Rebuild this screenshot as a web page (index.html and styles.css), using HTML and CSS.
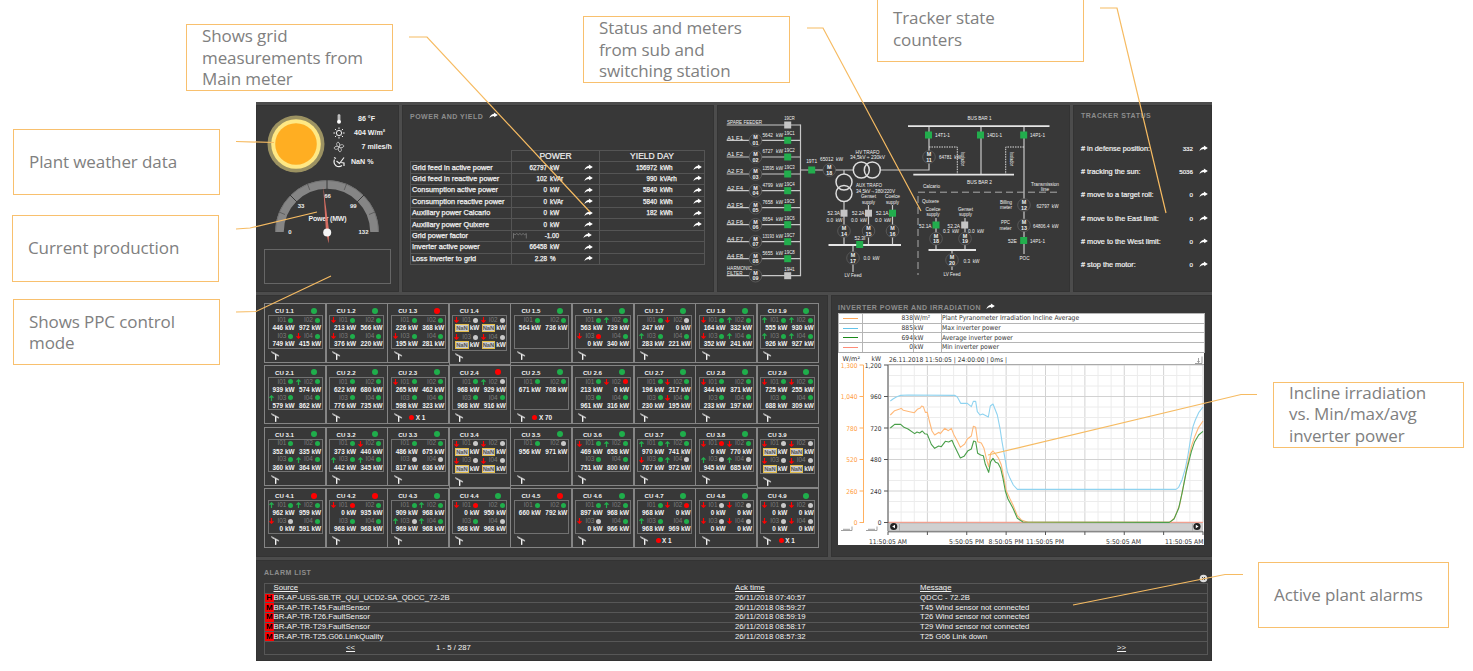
FILE: index.html
```html
<!DOCTYPE html>
<html lang="en">
<head>
<meta charset="utf-8">
<title>Solar plant overview</title>
<link rel="stylesheet" href="styles.css">
</head>
<body>
<svg class="defs" width="0" height="0">
  <symbol id="share" viewBox="0 0 10 7"><path fill="#fff" d="M.4 6.6C1 3.7 3 2.1 5.4 1.9V.2L9.8 2.9 5.9 5.5 5.7 4C3.5 4 1.8 4.8.4 6.6Z"/></symbol>
  <symbol id="panel" viewBox="0 0 10 10"><path fill="none" stroke="#ddd" stroke-width=".9" d="M.3.6 9 5.2M.6 1.6 8.6 5.8M5 3.6V9.8"/><path fill="none" stroke="#fff" stroke-width="1.3" d="M5.3 3.8V9.8"/></symbol>
</svg>
<main class="stage">
  <div class="dashboard">
    <div class="row row-top">
      <section class="panel weather">
        <div class="weather-head">
          <svg class="sun" width="58" height="58" viewBox="0 0 58 58"><circle cx="29" cy="29" r="28.5" fill="#9c9262"/><circle cx="29" cy="29" r="24.8" fill="#ffe884"/><circle cx="29" cy="29" r="20.8" fill="#ffae22"/></svg>
          <ul class="readings">
            <li><svg width="12" height="12" viewBox="0 0 12 12"><path d="M5 1.8h2v5.4h-2z" fill="#aaa" stroke="#ddd" stroke-width=".7"/><circle cx="6" cy="8.8" r="2" fill="#fff"/></svg><span class="v1">86 °F</span></li>
            <li><svg width="12" height="12" viewBox="0 0 12 12" fill="none" stroke="#eee"><circle cx="6" cy="6" r="2.6"/><path d="M6 .4v1.8M6 9.8v1.8M.4 6h1.8M9.8 6h1.8M2 2l1.3 1.3M8.7 8.7 10 10M10 2 8.7 3.3M3.3 8.7 2 10"/></svg><span class="v2">404 W/m²</span></li>
            <li><svg width="12" height="12" viewBox="0 0 12 12" fill="none" stroke="#bbb"><path d="M6 6C3 5 3 2 5 1c2 1 2 3 1 5ZM6 6c1-3 4-3 5-1-1 2-3 2-5 1ZM6 6c3 1 3 4 1 5-2-1-2-3-1-5ZM6 6C5 9 2 9 1 7c1-2 3-2 5-1Z"/></svg><span class="v3">7 miles/h</span></li>
            <li><svg width="12" height="12" viewBox="0 0 12 12" fill="none" stroke="#eee" stroke-width="1.2"><path d="M1.5 3.5C-.5 9 5 12.5 9 9.500M3.500 5l3 2.500 4.500-6M8 6.500l3 .5V10M1 1.500l2 1M5 10.500h3"/></svg><span class="v4">NaN %</span></li>
          </ul>
        </div>
        <svg class="gauge" width="140" height="72" viewBox="257 176 140 72">
          <path d="M279.500 232a47.500 47.500 0 0 1 95 0" fill="none" stroke="#858585" stroke-width="8.500"/>
          <path d="M275.500 232a51.500 51.500 0 0 1 103 0" fill="none" stroke="#6f6f6f" stroke-width=".8"/>
          <g stroke="#383838"><path d="M327 179v11M289.500 194.500l7.500 7.500M364.500 194.500l-7.500 7.500"/><path stroke-width=".5" d="M279 212l6 2.500M375 212l-6 2.500M307.500 184l2.300 6M346.500 184l-2.300 6"/></g>
          <g class="dial"><text x="290" y="234.200">0</text><text x="301" y="208.200">33</text><text x="327.500" y="198">66</text><text x="353.300" y="208.200">99</text><text x="363.500" y="234.200">132</text></g>
          <text class="dial-title" x="327.500" y="221" textLength="38">Power (MW)</text>
          <path d="M323.200 185.500 326 232 328.600 243.500 329.200 232Z" fill="#e87468" opacity=".9"/>
          <circle cx="327.200" cy="232.500" r="4" fill="#f5f5f5"/>
        </svg>
        <div class="ppc-box"></div>
      </section>
      <section class="panel power">
        <h2>POWER AND YIELD <svg width="9" height="7"><use href="#share"/></svg></h2>
        <table class="yield"><thead><tr><th class="blank"></th><th>POWER</th><th>YIELD DAY</th></tr></thead><tbody id="yield"></tbody></table>
      </section>
      <section class="panel"><svg id="diagram" class="diagram" width="353" height="187" viewBox="717 105 353 187"></svg></section>
      <section class="panel tracker">
        <h2>TRACKER STATUS</h2>
        <ul id="tracker"></ul>
      </section>
    </div>
    <div class="row row-mid">
      <section class="panel units"><div id="units" class="unit-grid"></div></section>
      <section class="panel trend">
        <h2>INVERTER POWER AND IRRADIATION <svg width="9" height="7"><use href="#share"/></svg></h2>
        <table class="legend"><tbody>
          <tr><td><i class="key orange"></i></td><td class="num">838</td><td>W/m²</td><td>Plant Pyranometer Irradiation Incline Average</td></tr>
          <tr><td><i class="key blue"></i></td><td class="num">885</td><td>kW</td><td>Max inverter power</td></tr>
          <tr><td><i class="key green"></i></td><td class="num">694</td><td>kW</td><td>Average inverter power</td></tr>
          <tr><td><i class="key red"></i></td><td class="num">0</td><td>kW</td><td>Min inverter power</td></tr>
        </tbody></table>
        <svg id="chart" class="chart" width="366" height="193" viewBox="838 352 366 193"></svg>
      </section>
    </div>
    <section class="panel alarms">
      <div class="alarm-head"><h2>ALARM LIST</h2><svg width="9" height="9" viewBox="0 0 9 9"><circle cx="4.500" cy="4.500" r="3.800" fill="#ddd"/><path d="M3 3l3 3M6 3 3 6" stroke="#444"/></svg></div>
      <table class="alarm-table"><tbody>
        <tr class="heads"><td></td><td>Source</td><td>Ack time</td><td>Message</td></tr>
        <tr><td class="sev">H</td><td>BR-AP-USS-SB.TR_QUI_UCD2-SA_QDCC_72-2B</td><td>26/11/2018 07:40:57</td><td>QDCC - 72.2B</td></tr>
        <tr><td class="sev">M</td><td>BR-AP-TR-T45.FaultSensor</td><td>26/11/2018 08:59:27</td><td>T45 Wind sensor not connected</td></tr>
        <tr><td class="sev">M</td><td>BR-AP-TR-T26.FaultSensor</td><td>26/11/2018 08:59:19</td><td>T26 Wind sensor not connected</td></tr>
        <tr><td class="sev">M</td><td>BR-AP-TR-T29.FaultSensor</td><td>26/11/2018 08:58:17</td><td>T29 Wind sensor not connected</td></tr>
        <tr><td class="sev">M</td><td>BR-AP-TR-T25.G06.LinkQuality</td><td>26/11/2018 08:57:32</td><td>T25 G06 Link down</td></tr>
      </tbody></table>
      <div class="pager"><u>&lt;&lt;</u><span>1 - 5 / 287</span><u>&gt;&gt;</u></div>
    </section>
  </div>

  <svg class="leaders" width="1473" height="671">
    <path d="M409 37h18L590 212M807 28h16L921 211M1100 8h17L1166 213M236 141.500 274 142.500M236 229 250 228 317 212M236 312 256 311.500 331 276M1257 394.500h-16L988 455M1243 574.500h-18L1073 605"/>
  </svg>
  <div class="note n-grid">Shows grid<br>measurements from<br>Main meter</div>
  <div class="note n-status">Status and meters<br>from sub and<br>switching station</div>
  <div class="note n-tracker">Tracker state<br>counters</div>
  <div class="note n-weather">Plant weather data</div>
  <div class="note n-current">Current production</div>
  <div class="note n-ppc">Shows PPC control<br>mode</div>
  <div class="note n-incline">Incline irradiation<br>vs. Min/max/avg<br>inverter power</div>
  <div class="note n-alarms">Active plant alarms</div>
</main>
<script src="app.js"></script>
</body>
</html>
```

FILE: styles.css
```css
* { box-sizing: border-box; }
body { margin: 0; background: #fff; font-family: "Liberation Sans", Arial, sans-serif; }
.defs { position: absolute; }
.stage { position: relative; width: 1473px; height: 671px; overflow: hidden; padding: 102px 0 0 256px; }
.dashboard { width: 956px; height: 559px; display: grid; grid-template-rows: 187px 262px 101px; gap: 3px; padding-top: 3px; background: #4c4c4c; color: #f2f2f2; }
.row { display: grid; gap: 3px; }
.row-top { grid-template-columns: 143px 312px 353px 139px; }
.row-mid { grid-template-columns: 572px 381px; }
.panel { background: #383838; overflow: hidden; min-width: 0; box-shadow: inset 0 0 0 1px #333; }
h2 { margin: 0; font-size: 7px; line-height: 8px; font-weight: bold; letter-spacing: .5px; color: #8d8d8d; white-space: nowrap; }
h2 svg { margin-left: 3px; }
ul { list-style: none; margin: 0; padding: 0; }

.weather { padding: 7px 0 0 8px; }
.weather-head { display: flex; padding-left: 3px; height: 64px; }
.sun { margin-top: 2.500px; flex: none; }
.readings { padding-left: 8px; }
.readings li { display: flex; align-items: center; height: 14.2px; font-size: 7.1px; font-weight: bold; white-space: nowrap; }
.readings svg { margin-right: 6px; }
.v1 { padding-left: 7px; }
.v2 { padding-left: 3px; }
.v3 { padding-left: 10.5px; }
.v4 { padding-left: 0; }
.gauge { display: block; margin-left: -7px; }
.dial { font-size: 6px; font-weight: bold; fill: #eee; text-anchor: middle; }
.dial-title { font-size: 7px; font-weight: bold; fill: #eee; text-anchor: middle; }
.ppc-box { width: 127px; height: 35px; border: 1px solid #666; margin-top: 1px; }

.power { padding: 7px 0 0 8px; }
.yield { border-collapse: collapse; table-layout: fixed; width: 295px; margin-top: 29px; font-size: 7.3px; }
.yield th { font-size: 8.5px; font-weight: normal; height: 11.4px; padding: 0; line-height: 10px; border: 1px solid #555; -webkit-text-stroke: .2px; }
.yield th:nth-child(1) { width: 101px; }
.yield th:nth-child(2) { width: 88px; }
.yield th.blank { border-left: none; border-top: none; }
.yield td { height: 11.4px; padding: 0 0 0 1px; line-height: 10px; border: 1px solid #555; white-space: nowrap; -webkit-text-stroke: .25px; }
.reading { display: grid; grid-template-columns: 34px 31px 10px; column-gap: 3px; align-items: center; font-size: 6.3px; }
.reading b { font-weight: normal; text-align: right; }
.reading.day { grid-template-columns: 56px 30px 10px; }
.reading.pf { grid-template-columns: 13px 32px 19px 10px; column-gap: 1px; }
.reading.pf > svg:last-child { margin-left: 3px; }

.diagram { display: block; font-size: 6px; fill: #f0f0f0; }
.wire { stroke: #c8c8c8; stroke-width: 1.2; fill: none; }
.bus { stroke: #e6e6e6; stroke-width: 1.8; }
.dots { stroke: #ddd; stroke-width: 1; stroke-dasharray: 1.500 1; fill: none; }
.dash { stroke: #aaa; stroke-width: 1; stroke-dasharray: 7 4; fill: none; }
.coil { stroke: #ddd; stroke-width: 1.500; fill: none; }
.meter { fill: #383838; stroke: #606060; stroke-width: .8; }
.tiny { font-size: 5.4px; font-weight: bold; text-anchor: middle; }
.small { font-size: 4.800px; }
.mid { text-anchor: middle; }
.end { text-anchor: end; }

.tracker { padding: 7px 4px 0 8px; }
.tracker ul { padding-top: 17px; }
.tracker li { display: grid; grid-template-columns: 1fr auto 9px; column-gap: 6px; align-items: center; height: 23.2px; font-size: 7.3px; white-space: nowrap; -webkit-text-stroke: .2px; }
.tracker b { font-weight: normal; font-size: 6.2px; }

.units { padding: 8px 0 0 8px; }
.unit-grid { display: grid; grid-template-columns: repeat(9, 61.600px); grid-template-rows: repeat(4, 59.700px); row-gap: 2.100px; }
.unit { border: 1px solid #858585; padding: 2px 2.500px 0; margin-right: -.5px; font-size: 6.4px; font-weight: bold; }
.unit.fault { height: 61.700px; }
.unit-title { display: flex; justify-content: space-between; align-items: center; height: 9px; padding: 0 6px 0 7.500px; font-size: 6.1px; }
.lamp { width: 5px; height: 5px; border-radius: 50%; background: #1fae4b; flex: none; }
.lamp.big { width: 6px; height: 6px; }
.lamp.r { background: #f00; }
.lamp.w { background: #c9c9c9; }
.inverters { height: 33.500px; border: 1px solid #727272; display: grid; grid-template-columns: 26px 26.500px; grid-auto-rows: 16px; }
.fault .inverters { height: 35.500px; grid-auto-rows: 17px; }
.inv { line-height: 8.300px; text-align: right; white-space: nowrap; }
.inv-name { display: flex; align-items: center; justify-content: flex-end; gap: 2px; height: 8px; padding-right: 1.200px; font-weight: normal; color: #7c7c7c; }
.inv-name svg { margin-right: 1px; }
.nan { display: inline-block; background: #ccc; color: #555; border: 1px solid #e3bd4b; line-height: 6px; height: 8px; margin-right: 1px; width: 13.500px; text-align: center; font-size: 5.8px; }
.unit-foot { display: flex; align-items: center; gap: 1.500px; padding: 2px 0 0 3px; height: 12px; }
.unit-foot .lamp { margin-left: 5px; }

.trend { padding: 8px 0 0 7px; }
.legend { border-collapse: collapse; table-layout: fixed; width: 367px; margin-top: 1px; background: #fff; color: #333; font: 6.7px "DejaVu Sans Condensed", "DejaVu Sans", sans-serif; font-stretch: condensed; }
.legend td { border: 1px solid #b5b5b5; height: 9.700px; line-height: 8px; padding: 0; white-space: nowrap; }
.legend td:nth-child(1) { width: 24px; }
.legend td:nth-child(2) { width: 51px; text-align: right; }
.legend td:nth-child(3) { width: 28px; }
.key { display: block; width: 15px; height: 1px; margin: 0 auto; }
.orange { background: #ffa95c; }
.blue { background: #62c3ea; }
.green { background: #1a8a1a; }
.red { background: #ff8c78; }
.chart { display: block; background: #fff; margin-top: -1px; font: 6.5px "DejaVu Sans Condensed", "DejaVu Sans", sans-serif; font-stretch: condensed; fill: #333; }
.chart .irr { fill: #ff9c40; }

.alarms { padding: 9px 4px 0 8px; }
.alarm-head { display: flex; justify-content: space-between; height: 14px; }
.alarm-head svg { margin-top: 5px; }
.alarm-table { border-collapse: collapse; table-layout: fixed; width: 944px; font-size: 7.750px; }
.alarm-table tr { border: 1px solid #575757; }
.alarm-table td { height: 9.700px; padding: 0; line-height: 8px; white-space: nowrap; }
.alarm-table td:nth-child(1) { width: 9px; }
.alarm-table td:nth-child(2) { width: 461.500px; }
.alarm-table td:nth-child(3) { width: 185px; }
.heads { text-decoration: underline; }
.alarm-table .sev { background: #f00; color: #000; font-weight: bold; text-align: center; font-size: 8px; }
.pager { width: 944px; height: 13px; border: 1px solid #575757; border-top: none; display: grid; grid-template-columns: 90px 681px auto; padding-left: 81px; font-size: 7.750px; line-height: 12px; }

.leaders { position: absolute; left: 0; top: 0; }
.leaders path { fill: none; stroke: #f6bb62; stroke-width: 1.200; }
.note { position: absolute; display: flex; align-items: center; border: 1px solid #f8c06e; background: #fff; color: #808080; font: 17px/21.500px "Open Sans", "Noto Sans", sans-serif; letter-spacing: -.1px; padding-left: 15px; white-space: nowrap; width: 207px; height: 67px; }
.n-grid { left: 186px; top: 24px; }
.n-status { left: 583px; top: 16px; }
.n-tracker { left: 877px; top: -5px; }
.n-weather { left: 13px; top: 129px; height: 66px; }
.n-current { left: 12px; top: 215px; padding-bottom: 2px; }
.n-ppc { left: 13px; top: 299px; height: 66px; }
.n-incline { left: 1273px; top: 382px; width: 191px; height: 66px; padding-bottom: 2px; }
.n-alarms { left: 1258px; top: 562px; width: 191px; height: 66px; padding-bottom: 1px; }
```

FILE: app.js
```js
const el = id => document.getElementById(id);
const share = '<svg width="9" height="7"><use href="#share"/></svg>';

/* Power and yield table */
const yieldRows = [
  ['Grid feed in active power', '62797', 'kW', '156972', 'kWh'],
  ['Grid feed in reactive power', '102', 'kVAr', '990', 'kVArh'],
  ['Consumption active power', '0', 'kW', '5840', 'kWh'],
  ['Consumption reactive power', '0', 'kVAr', '5840', 'kWh'],
  ['Auxiliary power Calcario', '0', 'kW', '182', 'kWh'],
  ['Auxiliary power Quixere', '0', 'kW', '', ''],
  ['Grid power factor', '-1.00', null],
  ['Inverter active power', '66458', 'kW'],
  ['Loss inverter to grid', '2.28', '%']
];
el('yield').innerHTML = yieldRows.map(([name, p, u, d, du]) => {
  const power = u === null
    ? `<div class="reading pf"><svg width="14" height="7" fill="none" stroke="#999" stroke-width=".6"><path d="M.5 6.500V1.500q1.600 2.500 3.200 0q1.600 2.500 3.200 0q1.600 2.500 3.200 0q1.600 2.500 3.200 0V6.500"/></svg><b>${p}</b><span></span>${share}</div>`
    : `<div class="reading"><b>${p}</b><span>${u}</span>${share}</div>`;
  const day = d === undefined ? '' : `<div class="reading day"><b>${d}</b><span>${du}</span>${share}</div>`;
  return `<tr><td>${name}</td><td>${power}</td><td>${day}</td></tr>`;
}).join('');

/* Tracker counters */
el('tracker').innerHTML = [
  ['in defense position', 332], ['tracking the sun', 5036], ['move to a target roll', 0],
  ['move to the East limit', 0], ['move to the West limit', 0], ['stop the motor', 0]
].map(([t, n]) => `<li><span># ${t}:</span><b>${n}</b>${share}</li>`).join('');

/* Single line diagram */
const T = (x, y, s, c = '', w) => `<text x="${x}" y="${y}" class="${c}"${w ? ` textLength="${w}" lengthAdjust="spacingAndGlyphs"` : ''}>${s}</text>`;
const W = (d, c = 'wire') => `<path class="${c}" d="${d}"/>`;
const S = (x, y, on = true) => `<rect x="${x - 3.5}" y="${y - 3.5}" width="7" height="7" fill="${on ? '#22ae4d' : '#c4c4c4'}"/>`;
const M = (x, y, n) => `<circle class="meter" cx="${x}" cy="${y}" r="6.3"/>` + T(x, y - 1, 'M', 'tiny') + T(x, y + 4.6, n, 'tiny');
let d = W('M800.5 124.500V276.200') + W('M800.500 170H853.300M880.500 170H929V126M844 170V174M844 202V245M868.500 205V245M892.500 205V245M853 245V272');
[['SPARE FEEDER', 125, '', '', '19CR'], ['A1 F1', 140.3, '01', '5642', '19C1'], ['A1 F2', 157, '02', '6727', '19C2'],
 ['A2 F3', 174, '03', '13595', '19C3'], ['A2 F4', 190.7, '04', '4799', '19C4'], ['A3 F5', 207.7, '05', '7658', '19C5'],
 ['A3 F6', 224.7, '06', '8654', '19C6'], ['A4 F7', 241.7, '07', '13193', '19C7'], ['A4 F8', 258.7, '08', '5655', '19C8'],
 ['', 275.7, '09', '', '19H1']].forEach(([name, y, m, v, sw], i) => {
  d += W(`M726.700 ${y}H800.500`) + S(787.7, y, i > 0 && i < 9) + T(789.500, y - 5, sw, 'mid', 10.500);
  if (m) d += M(755.5, y, m);
  d += T(727, y - .7, name, '', i === 0 ? 35 : 0);
  if (v) d += T(762.500, y - 3.6, v, v.length === 5 ? 'small' : '', v.length === 5 ? 11.5 : 10.5) + T(776, y - 3.6, 'kW', '', 7);
});
d += T(727, 270, 'HARMONIC', '', 25) + T(727, 275, 'FILTER', '', 15.5);
d += S(811.7, 170) + T(811.7, 163.3, '19T1', 'mid', 11) + M(829.3, 170, '18') + T(831.5, 160.5, '65012 &#160;kW', 'mid', 23);
d += '<g class="coil"><circle cx="861.300" cy="170" r="8"/><circle cx="872.300" cy="170" r="8"/><circle cx="844" cy="182" r="8"/><circle cx="844" cy="193.500" r="8"/></g>';
d += T(867.500, 153.500, 'HV TRAFO', 'mid', 24) + T(867.500, 159.200, '34,5kV ÷ 230kV', 'mid', 35);
d += T(856, 187, 'AUX TRAFO', '', 26) + T(856, 192.800, '34,5kV→380/220V', '', 39);
d += T(868.5, 198.2, 'Genset', 'mid', 15) + T(868.5, 203.500, 'supply', 'mid', 13) + T(892.5, 198.2, 'Coelce', 'mid', 15) + T(892.5, 203.5, 'supply', 'mid', 13);
[[844, '52.3A', '14', 0], [868.5, '52.2A', '15', 0], [892.5, '52.1A', '16', 1]].forEach(([x, t, m, on]) => {
  d += S(x, 213.2, on) + T(x - 4, 215.2, t, 'end', 12.500) + T(x - 9.500, 222.4, '0.0 &#160;kW', 'mid', 16) + M(x, 231, m);
});
d += W('M828.500 245H901', 'bus') + S(859.7, 244.500) + T(860, 239.8, '52.3I', 'mid', 11) + M(853, 258, '17') + T(863.500, 259.500, '0.0 &#160;kW', '', 16) + T(853, 277, 'LV Feed', 'mid', 17);
d += W('M981 126V174.500M1024 126V254M936 218V250M965 218V250M952 250V270') + W('M908 126.200H1049.500M913.300 174.700H1014M928.500 250H976', 'bus');
d += W('M929 147H957.300V174M1024 147H1005.700V174', 'dots') + W('M918 192.200H1058M918 196V275', 'dash');
d += T(979.5, 120, 'BUS BAR 1', 'mid', 24) + T(979.5, 183.500, 'BUS BAR 2', 'mid', 25);
d += S(928.5, 135) + S(980.5, 135) + S(1023.7, 135) + T(935, 137.3, '14T1-1', '', 15) + T(987, 137.3, '14D1-1', '', 15) + T(1030, 137.3, '14P1-1', '', 15);
d += M(929, 157, '11') + T(939, 159, '64781 &#160;kW', '', 22);
d += '<text transform="translate(961.300 152) rotate(90)" textLength="14" lengthAdjust="spacingAndGlyphs">Isolador</text><text transform="translate(1009.500 152) rotate(90)" textLength="14" lengthAdjust="spacingAndGlyphs">Isolador</text>';
d += T(923, 188.2, 'Calcario', '', 17) + T(922, 202.5, 'Quixere', '', 17) + T(1045, 186.2, 'Transmission', 'mid', 28) + T(1045, 191.300, 'line', 'mid', 8);
d += T(933, 211, 'Coelce', 'mid', 15) + T(933, 216, 'supply', 'mid', 13) + T(965.5, 210.500, 'Genset', 'mid', 15) + T(965.5, 216, 'supply', 'mid', 13);
d += S(936, 225) + S(964.7, 225, false) + T(931.5, 227.500, '52.1A', 'end', 12.5) + T(960, 227.500, '52.2A', 'end', 12.500);
d += T(943, 233, '0.3 &#160;kW', '', 16) + T(968, 233, '0.0 &#160;kW', '', 16) + M(936, 238.7, '18') + M(965, 238.7, '19') + M(952, 260, '20');
d += T(963.5, 263, '0.3 &#160;kW', '', 16) + T(952, 276, 'LV Feed', 'mid', 17);
d += T(1006, 204, 'Billing', 'mid', 12) + T(1006, 209.300, 'meter', 'mid', 12) + T(1005.5, 224.300, 'PPC', 'mid', 9) + T(1005.5, 230, 'meter', 'mid', 12);
d += M(1024, 205, '12') + M(1024, 225.3, '13') + T(1036.500, 207.5, '62797 &#160;kW', '', 22) + T(1033, 228, '64806.4 &#160;kW', '', 25.500);
d += S(1023.7, 240.5) + T(1012.5, 243, '52E', 'mid', 9) + T(1030, 243, '14P1-1', '', 15) + T(1024.5, 260, 'POC', 'mid', 10);
el('diagram').innerHTML = d;

/* Converter units: title lamp, then inverters as arrow + lamp + value; optional stopped-tracker count */
const units = [
  'g|.g446 .g972 .g749 dg415', 'g|dg213 .g566 dg376 .g220', 'r|.g226 .g368 dg195 .g281', '-|N', 'g|.g564 .g736', 'g|.g563 ug739 dr0 .g340', 'g|.g247 dw0 ug283 .g221', 'g|dg164 ug332 dg352 ug241', 'g|ug555 ug930 ug926 ug927',
  'g|.g939 ug574 ug579 .g862', 'g|.g622 .g680 .g776 .g735', 'g|dg265 .g462 .g598 .g323|1', 'r|.g968 uw929 .g968 .g916', 'g|.g671 .g708|70', 'g|.g213 dr0 .g961 .g316', 'g|.g196 dg217 .g230 dg195', 'g|dg344 .g371 .g233 .g197', 'g|dg725 dg255 .g688 .g309',
  'g|.g352 .g335 .g360 ug364', 'g|.g373 dg440 ug442 ug345', 'g|.g486 .g675 .w817 .w636', '-|N', 'g|.g956 .w971', 'g|dg469 ug658 .g751 .g800', 'g|ug970 ug741 dg767 uw972', 'g|dr0 dg770 uw945 uw685', '-|N',
  'r|ug962 ug959 dw0 .g591', 'r|dr0 .g935 .g968 .g968', 'g|.g909 ug968 uw969 ug968', 'g|dr0 .g950 .g968 .w968', 'r|.g660 .g792', 'g|.g897 ug968 dw0 .g966', 'g|.g968 dr0 ug968 .g969|1', 'g|dw0 dw0 dw0 dw0', 'g|dw0 dw0 dw0 dw0|1'
];
const arrow = a => a === '.' ? '' : `<svg width="5" height="6" viewBox="0 0 5 6" fill="none" stroke="${a === 'u' ? '#22ae4d' : '#f00'}" stroke-width="1.200"><path d="${a === 'u' ? 'M2.500 6V.8M.5 2.700 2.500.8l2 1.900' : 'M2.500 0v5.200M.5 3.300l2 1.900 2-1.900'}"/></svg>`;
el('units').innerHTML = units.map((u, i) => {
  let [lamp, inv, stopped] = u.split('|');
  const fault = inv === 'N';
  const list = fault ? ['dwN', 'dwN', 'dwN', 'dwN'] : inv.split(' ');
  return `<div class="unit${fault ? ' fault' : ''}">
    <div class="unit-title"><span>CU ${Math.floor(i / 9) + 1}.${i % 9 + 1}</span>${lamp === '-' ? '' : `<i class="lamp big ${lamp}"></i>`}</div>
    <div class="inverters">${list.map((s, k) => `<div class="inv"><div class="inv-name">${arrow(s[0])}<span>I0${k + 1}</span><i class="lamp ${s[1]}"></i></div>${fault ? '<span class="nan">NaN</span>' : s.slice(2) + ' '}kW</div>`).join('')}</div>
    <div class="unit-foot"><svg width="9" height="9"><use href="#panel"/></svg>${stopped ? `<i class="lamp r"></i><span>X ${stopped}</span>` : ''}</div></div>`;
}).join('');

/* Trend chart */
let c = '<g stroke="#ececec" stroke-width="1">';
for (let i = 0; i <= 24; i++) c += `<path d="M${888 + i * 13.125} 365V522.500" ${i % 3 ? '' : 'stroke="#d2d2d2"'}/>`;
for (let i = 0; i <= 15; i++) c += `<path d="M888 ${365 + i * 10.5}H1203" ${i % 3 ? '' : 'stroke="#d2d2d2"'}/>`;
c += '</g><path d="M838 352.500H1204M888 364.500H1204" stroke="#aaa"/>';
const line = (pts, col) => `<polyline transform="translate(828 295) scale(.33333)" fill="none" stroke-linejoin="round" stroke="${col}" stroke-width="3.300" points="${pts}"/>`;
c += line('180,682 1125,682', '#f0a090');
c += line('187,318 195,312 205,306 218,301 240,300 380,301 388,306 398,325 418,325 430,335 436,319 443,319 448,350 456,360 464,357 481,366 487,333 495,327 508,360 516,400 522,440 530,485 538,530 546,550 556,570 568,583 1044,583 1052,577 1062,555 1072,520 1080,480 1088,430 1095,395 1102,375 1112,353 1125,336', '#8fd3f0');
c += line('187,360 200,347 215,342 220,340 226,346 245,350 259,353 268,343 277,339 281,333 286,335 292,352 298,352 304,378 312,408 320,420 333,412 337,416 350,400 361,407 370,400 378,420 388,438 397,457 410,447 418,432 430,423 436,394 443,397 449,440 460,444 468,460 475,490 482,515 488,475 495,468 505,480 512,490 520,510 528,550 535,588 545,610 555,630 568,662 580,675 600,682 1026,682 1040,668 1055,630 1065,580 1078,510 1090,455 1100,425 1112,397 1125,378', '#ffb878');
c += line('187,399 200,388 218,388 228,397 240,402 260,416 267,411 275,414 283,408 290,416 298,418 310,448 320,460 332,453 340,455 352,439 362,441 372,436 378,450 397,489 408,484 420,467 430,462 437,438 443,440 449,475 458,480 466,482 472,508 482,532 488,500 495,490 503,502 510,505 518,520 525,550 532,588 540,612 555,640 568,670 585,681 1024,682 1038,672 1052,640 1062,595 1075,530 1090,470 1100,440 1112,420 1125,409', '#4a9f4a');
c += '<path d="M863.500 365V523" stroke="#ffb060"/><path d="M888 365V531M888 531.800H1203" stroke="#555"/>';
['1,300', '1,040', '780', '520', '260', '0'].forEach((t, i) => {
  const y = 365 + i * 31.5;
  c += `<path d="M859.500 ${y}h4" stroke="#ffb060"/><path d="M884 ${y}h4" stroke="#555"/><text class="end irr" x="857.500" y="${y + 2.600}">${t}</text><text class="end" x="881.500" y="${y + 2.600}">${['1,200', '960', '720', '480', '240', '0'][i]}</text>`;
});
c += T(842.5, 360.500, 'W/m²', '', 17.5) + T(871.5, 360.500, 'kW', '', 9.5) + T(889, 361.700, '26.11.2018 11:50:05 | 24:00:00 | 0ms |', '', 118);
c += '<path d="M1195 363.500h7v-7M1198.500 358v4.500M1197.300 361l1.200 1.500 1.200-1.500M841 530.500h11v-4M843 529.300h7M866 530.500h11v-4M868 529.300h7" fill="none" stroke="#888" stroke-width=".8"/>';
c += '<rect x="889" y="523.300" width="313.500" height="7.500" fill="#d0d0d0" stroke="#aaa" stroke-width=".5"/><path d="M899.500 524v6.500M1192.500 524v6.500" stroke="#999" stroke-width=".6"/><circle cx="893.700" cy="526.500" r="3.600" fill="#222"/><circle cx="1197" cy="526.500" r="3.600" fill="#222"/><path d="M895 524.700v3.600l-2.800-1.800ZM1195.800 524.700v3.600l2.800-1.800Z" fill="#fff"/>';
for (let i = 0; i <= 8; i++) c += `<path d="M${Math.min(888 + i * 39.375, 1203)} 531.500v3.500" stroke="#555"/>`;
[['11:50:05 AM', 869, 38], ['5:50:05 PM', 949, 35], ['8:50:05 PM', 988.5, 35], ['11:50:05 PM', 1026, 38], ['5:50:05 AM', 1106, 35], ['11:50:05 AM', 1165, 38.500]].forEach(([t, x, w]) => { c += T(x, 543.700, t, '', w); });
el('chart').innerHTML = c;
```
